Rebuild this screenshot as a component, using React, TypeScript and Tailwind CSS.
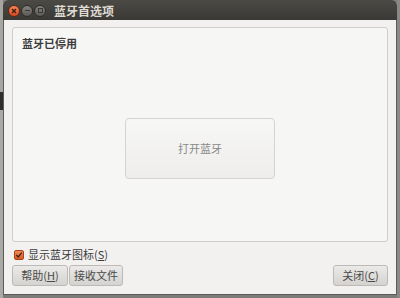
const font = { fontFamily: '"Noto Sans CJK SC", "Noto Sans", sans-serif' };

function WinButton({ kind }: { kind: "close" | "min" | "max" }) {
  if (kind === "close") {
    return (
      <div className="w-[12px] h-[12px] rounded-full bg-gradient-to-b from-[#f5875a] to-[#d7461b] border border-[#5a2a14] flex items-center justify-center">
        <svg width="6" height="6" viewBox="0 0 6 6">
          <path d="M1 1 L5 5 M5 1 L1 5" stroke="#3a1a0c" strokeWidth="1.3" />
        </svg>
      </div>
    );
  }
  return (
    <div className="w-[12px] h-[12px] rounded-full bg-gradient-to-b from-[#858480] to-[#5a5955] border border-[#2e2d2a] flex items-center justify-center">
      {kind === "max" && <div className="w-[5px] h-[5px] border border-[#3a3936]" />}
      {kind === "min" && <div className="w-[5px] h-[1px] bg-[#3a3936]" />}
    </div>
  );
}

function Btn({ children, className = "" }: { children: React.ReactNode; className?: string }) {
  return (
    <div
      className={
        "h-[21px] flex items-center justify-center rounded-[3px] border border-[#bcbab5] bg-gradient-to-b from-[#ebeae8] to-[#d5d3cf] text-[11px] text-[#4a4a4a] " +
        className
      }
    >
      {children}
    </div>
  );
}

export default function App() {
  return (
    <div className="w-[400px] h-[298px] bg-[#7d7c78] flex overflow-hidden" style={font}>
      <div className="w-[3px] flex flex-col">
        <div className="h-[92px] bg-[#a6a5a1]" />
        <div className="h-[18px] bg-[#2d2d2b]" />
        <div className="flex-1 bg-[#a9a9a6]" />
      </div>
      <div className="w-[394px] h-[295px] flex flex-col rounded-t-[5px] overflow-hidden bg-[#f2f1f0]">
        <div className="h-[21px] bg-gradient-to-b from-[#4b4a45] to-[#3a3935] flex items-center pl-[5px] pt-[1px] gap-[1px]">
          <WinButton kind="close" />
          <WinButton kind="min" />
          <WinButton kind="max" />
          <span className="ml-[7px] text-[12px] font-bold text-[#dfdbd2] leading-none">蓝牙首选项</span>
        </div>
        <div className="flex-1 flex flex-col px-[8px] pt-[7px] pb-[8px] border-x border-b border-[#5c5b57]">
          <div className="h-[215px] rounded-[3px] border border-[#cfcdc9] bg-[#f6f6f5] flex flex-col px-[9px] pt-[10px]">
            <div className="text-[11px] font-bold text-[#3c3c3c] leading-none">蓝牙已停用</div>
            <div className="flex-1 flex items-center justify-center pt-[6px]">
              <div className="w-[150px] h-[61px] rounded-[4px] border border-[#d6d4d0] bg-gradient-to-b from-[#f7f7f6] to-[#eeedeb] flex items-center justify-center text-[11px] text-[#8a8a88]">
                打开蓝牙
              </div>
            </div>
          </div>
          <div className="mt-[7px] flex items-center gap-[4px] pl-[2px]">
            <div className="w-[10px] h-[10px] rounded-[2px] bg-gradient-to-b from-[#f08a55] to-[#d9581f] border border-[#a8441a] flex items-center justify-center">
              <svg width="8" height="8" viewBox="0 0 8 8">
                <path d="M1.3 4 L3.2 6 L6.8 1.6" stroke="#3a2314" strokeWidth="1.3" fill="none" />
              </svg>
            </div>
            <span className="text-[11px] text-[#3c3c3c] leading-none">
              显示蓝牙图标(<span className="underline">S</span>)
            </span>
          </div>
          <div className="mt-[5px] flex items-center">
            <Btn className="w-[56px]">
              帮助(<span className="underline">H</span>)
            </Btn>
            <Btn className="w-[54px] ml-[1px]">接收文件</Btn>
            <div className="flex-1" />
            <Btn className="w-[55px]">
              关闭(<span className="underline">C</span>)
            </Btn>
          </div>
        </div>
      </div>
      <div className="flex-1 bg-[#8a8986]" />
    </div>
  );
}
